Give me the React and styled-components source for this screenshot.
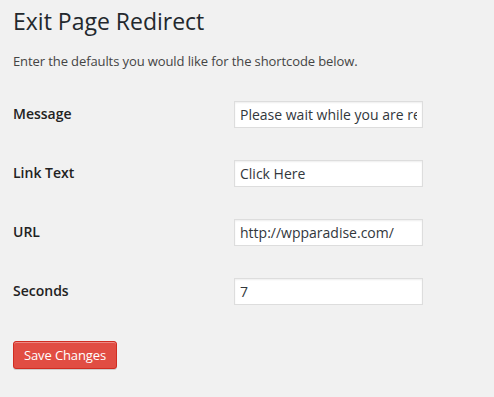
import styled, { createGlobalStyle } from 'styled-components';

const fields = [
  { label: 'Message', value: 'Please wait while you are redirected...' },
  { label: 'Link Text', value: 'Click Here' },
  { label: 'URL', value: 'http://wpparadise.com/' },
  { label: 'Seconds', value: '7' },
];

const App = () => (
  <>
    <GlobalStyle />
    <Wrap>
      <Title>Exit Page Redirect</Title>
      <Description>Enter the defaults you would like for the shortcode below.</Description>

      <FormTable>
        {fields.map((field) => (
          <Row key={field.label}>
            <Label>{field.label}</Label>
            <TextInput type="text" defaultValue={field.value} />
          </Row>
        ))}
      </FormTable>

      <SaveButton type="button">Save Changes</SaveButton>
    </Wrap>
  </>
);

export default App;

const GlobalStyle = createGlobalStyle`
  html, body {
    margin: 0;
    background: #f1f1f1;
  }

  body {
    font-family: "Open Sans", "Liberation Sans", sans-serif;
    color: #444;
    font-size: 13px;
  }
`;

const Wrap = styled.div`
  padding: 7px 0 0 13px;
  height: 390px;
`;

const Title = styled.h1`
  margin: 0;
  font-size: 23px;
  font-weight: 400;
  line-height: 29px;
  color: #23282d;
`;

const Description = styled.p`
  margin: 16px 0 13px;
  font-size: 13px;
  letter-spacing: -0.1px;
  line-height: 19.5px;
  color: #444;
`;

const FormTable = styled.div`
  display: flex;
  flex-direction: column;
`;

const Row = styled.div`
  display: grid;
  grid-template-columns: 221px 189px;
  align-items: center;
  padding: 16px 0;
`;

const Label = styled.label`
  font-size: 14px;
  font-weight: 600;
  line-height: 1.3;
  color: #222;
`;

const TextInput = styled.input`
  box-sizing: border-box;
  width: 189px;
  height: 27px;
  margin: 0;
  padding: 3px 5px;
  border: 1px solid #ddd;
  border-radius: 0;
  background: #fff;
  box-shadow: inset 0 1px 2px rgba(0, 0, 0, 0.07);
  font-family: "Open Sans", "Liberation Sans", sans-serif;
  font-size: 14px;
  color: #32373c;
  outline: none;
`;

const SaveButton = styled.button`
  display: block;
  box-sizing: border-box;
  margin-top: 20px;
  width: 104px;
  height: 28px;
  padding: 0 0 1px;
  border: 1px solid #d02c21;
  border-radius: 3px;
  background: #e14d43;
  box-shadow: inset 0 1px 0 #ec8a85, 0 1px 0 rgba(0, 0, 0, 0.15);
  font-family: "Open Sans", "Liberation Sans", sans-serif;
  font-size: 13px;
  letter-spacing: -0.1px;
  line-height: 26px;
  white-space: nowrap;
  text-align: center;
  color: #fff;
  cursor: pointer;
`;
